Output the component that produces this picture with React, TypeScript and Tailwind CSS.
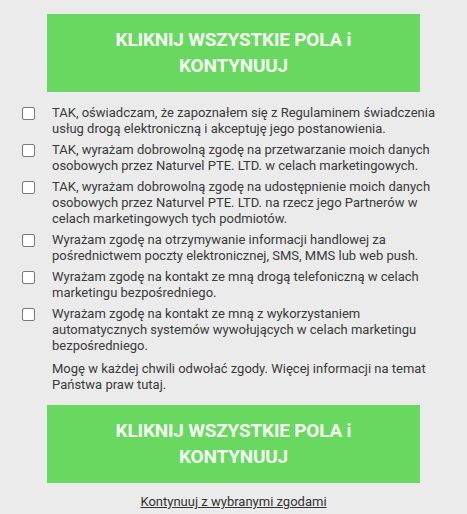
import React from 'react';

const consents = [
  'TAK, oświadczam, że zapoznałem się z Regulaminem świadczenia usług drogą elektroniczną i akceptuję jego postanowienia.',
  'TAK, wyrażam dobrowolną zgodę na przetwarzanie moich danych osobowych przez Naturvel PTE. LTD. w celach marketingowych.',
  'TAK, wyrażam dobrowolną zgodę na udostępnienie moich danych osobowych przez Naturvel PTE. LTD. na rzecz jego Partnerów w celach marketingowych tych podmiotów.',
  'Wyrażam zgodę na otrzymywanie informacji handlowej za pośrednictwem poczty elektronicznej, SMS, MMS lub web push.',
  'Wyrażam zgodę na kontakt ze mną drogą telefoniczną w celach marketingu bezpośredniego.',
  'Wyrażam zgodę na kontakt ze mną z wykorzystaniem automatycznych systemów wywołujących w celach marketingu bezpośredniego.',
];

function AcceptAllButton() {
  return (
    <button className="mx-auto block w-[373px] h-[78px] bg-[#68d860] text-[#f4fff2] font-bold text-[19px] leading-[26px] tracking-[-0.2px] px-6">
      KLIKNIJ WSZYSTKIE POLA i
      <br />
      KONTYNUUJ
    </button>
  );
}

export default function App() {
  return (
    <div
      className="w-[467px] h-[514px] bg-[#ebebeb] text-[#3a3a3a] overflow-hidden"
      style={{ fontFamily: 'Roboto, "Liberation Sans", sans-serif' }}
    >
      <div className="pt-[14px]">
        <AcceptAllButton />
      </div>

      {/* Consents */}
      <div className="pl-[22px] pr-[20px] pt-[13px] flex flex-col gap-[5px] text-[13px] leading-[16px]">
        {consents.map((text, i) => (
          <label key={i} className="flex items-start gap-[17px]">
            <span className="mt-[2px] shrink-0 w-[13px] h-[13px] rounded-[2px] border border-[#7a7a7a] bg-white" />
            <span>{text}</span>
          </label>
        ))}
        <p className="pl-[30px] pt-[2px]">
          Mogę w każdej chwili odwołać zgody. Więcej informacji na temat Państwa praw tutaj.
        </p>
      </div>

      <div className="pt-[12px]">
        <AcceptAllButton />
      </div>

      <div className="pt-[11px] text-center text-[13px] leading-[16px]">
        <a className="underline text-[#333]">Kontynuuj z wybranymi zgodami</a>
      </div>
    </div>
  );
}
